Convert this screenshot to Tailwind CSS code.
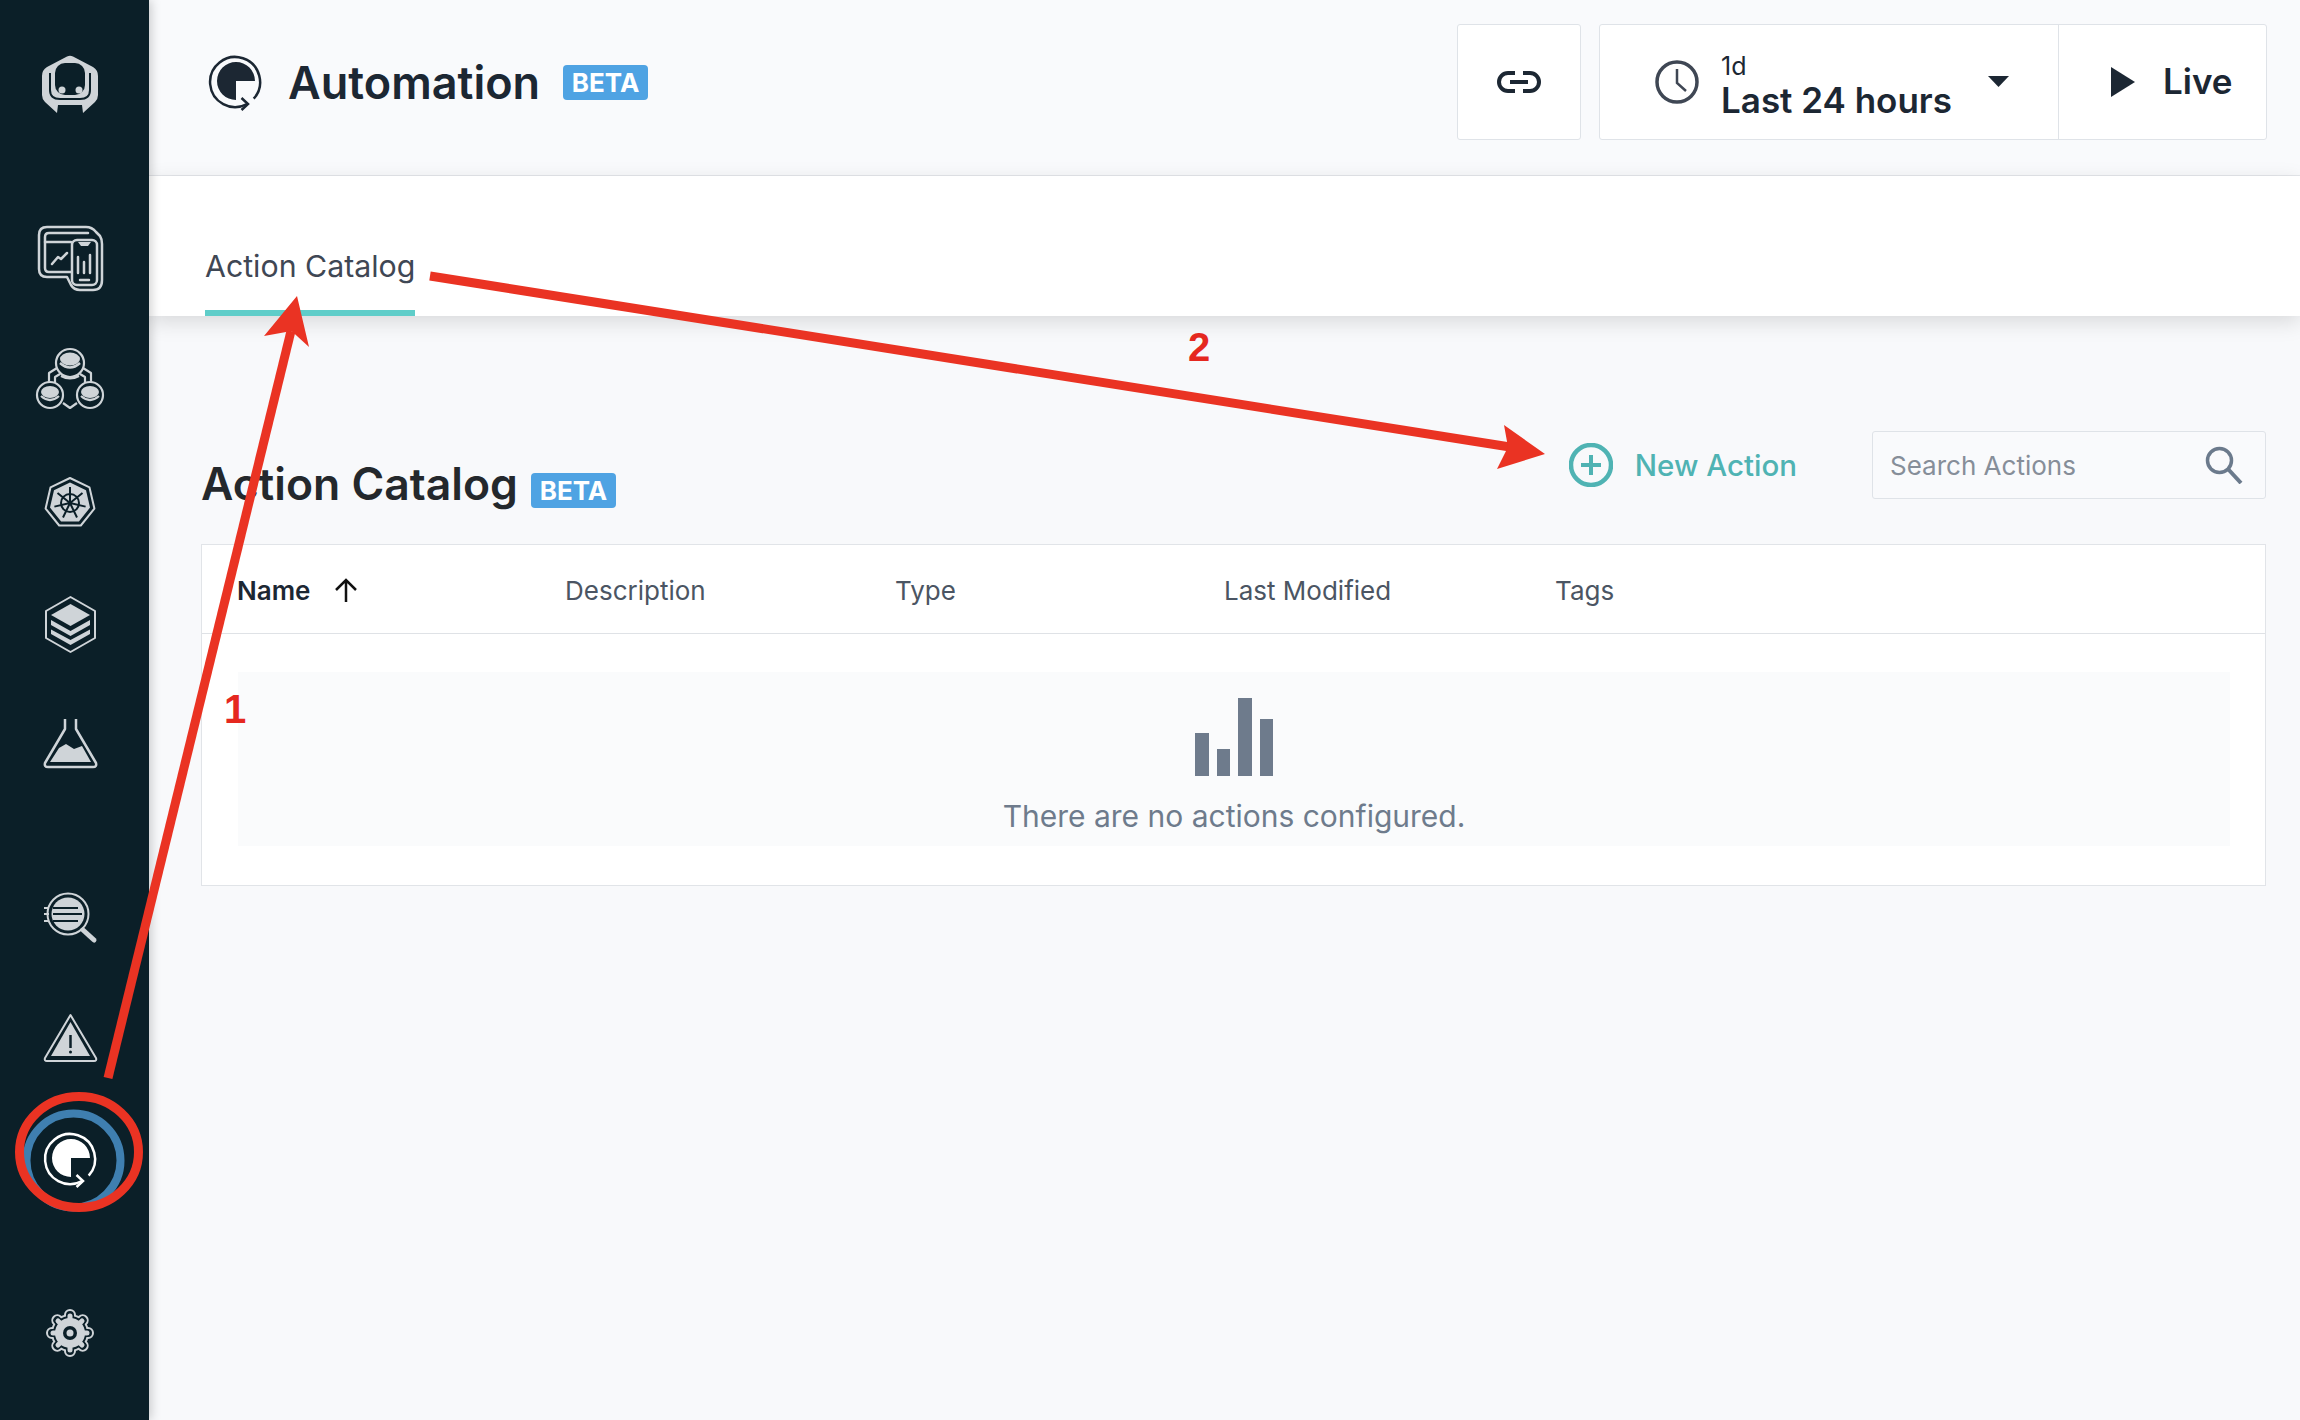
<!DOCTYPE html>
<html lang="en">
<head>
    <meta charset="UTF-8">
    <meta name="viewport" content="width=device-width, initial-scale=1.0">
    <title>Automation</title>
    <script src="https://cdn.jsdelivr.net/npm/@tailwindcss/browser@4"></script>
</head>
<body class="bg-[#f8f9fb]">
<div class="relative flex h-[1420px] w-[2300px] overflow-hidden bg-[#f8f9fb] font-['Inter',sans-serif] text-[#1c2733]">

    <!-- sidebar -->
    <aside class="z-10 flex h-full w-[149px] shrink-0 flex-col items-start bg-[#0b1f28] pl-[30px] pt-[45px] shadow-[2px_0_10px_rgba(0,0,0,0.2)]">
        <svg class="block" width="80" height="80" viewBox="0 0 80 80">
            <path d="M37 11.500 Q40 10 43 11.500 L63 22 Q68 25 68 31 V50 Q68 54 65 57 L53 68 L52 60 H28 L27 68 L15 57 Q12 54 12 50 V31 Q12 25 17 22 Z" fill="#cfd4d8"/>
            <rect x="25" y="18" width="30" height="32" rx="10" fill="#0b1f28"/>
            <path d="M20 28 V45 Q20 54 30 54 H50 Q60 54 60 45 V28" fill="none" stroke="#0b1f28" stroke-width="2"/>
            <circle cx="32" cy="45" r="3.500" fill="#cfd4d8"/>
            <circle cx="49" cy="45" r="3.500" fill="#cfd4d8"/>
        </svg>
        <svg class="mt-[90px] block" width="80" height="80" viewBox="0 0 80 80" fill="none" stroke="#cfd4d8" stroke-width="2.500" stroke-linecap="round" stroke-linejoin="round">
            <path d="M17 12 H56 Q62 12 66 17 L70 21 Q72 24 72 29 V65 Q72 75 63 75 H50 Q44 75 41 70 L37 62 H17 Q9 62 9 54 V20 Q9 12 17 12 Z"/>
            <path d="M41 57 H19 Q15 57 15 53 V22 Q15 18 19 18 H58"/>
            <path d="M15 27 H41"/>
            <rect x="42" y="25" width="25" height="45" rx="5"/>
            <path d="M48 27 H61 L58 31 H51 Z" fill="#cfd4d8" stroke="none"/>
            <path d="M48 42 V58 M54 47 V58 M60 40 V58"/>
            <path d="M50 65 H59"/>
            <path d="M22 49 L28 42 L31 44 L37 38"/>
        </svg>
        <svg class="mt-[40px] block" width="80" height="80" viewBox="0 0 80 80" fill="none" stroke="#cfd4d8" stroke-width="2.200" stroke-linejoin="round">
            <circle cx="40" cy="28" r="14"/>
            <circle cx="20" cy="60" r="13"/>
            <circle cx="60" cy="60" r="13"/>
            <ellipse cx="40" cy="24" rx="10" ry="6.500" fill="#cfd4d8" stroke="none"/>
            <path d="M30 28 Q40 37 50 28" stroke-width="2.500"/>
            <ellipse cx="20" cy="57" rx="9" ry="6" fill="#cfd4d8" stroke="none"/>
            <path d="M11 61 Q20 69 29 61"/>
            <ellipse cx="60" cy="57" rx="9" ry="6" fill="#cfd4d8" stroke="none"/>
            <path d="M51 61 Q60 69 69 61"/>
            <path d="M27 33 L19 38 V47 M53 33 L61 38 V47"/>
            <path d="M30 39 L25 42 V48 M50 39 L55 42 V48"/>
            <path d="M31 41 Q40 46 49 41"/>
            <path d="M33 68 L40 73 L47 68"/>
        </svg>
        <svg class="mt-[48px] block" width="80" height="80" viewBox="0 0 80 80" fill="none" stroke-linejoin="round">
            <polygon points="40,15 59.500,24.400 64.400,45.600 50.800,62.500 29.200,62.500 15.600,45.600 20.500,24.400" stroke="#cfd4d8" stroke-width="2"/>
            <polygon points="40,19.500 56,27.200 60,44.600 48.900,58.500 31.100,58.500 20,44.600 24,27.200" fill="#cfd4d8"/>
            <circle cx="40" cy="40" r="9" stroke="#0b1f28" stroke-width="2"/>
            <path d="M40 40 L40 24 M40 40 L52.500 30 M40 40 L55.600 43.600 M40 40 L47 54.500 M40 40 L33 54.500 M40 40 L24.400 43.600 M40 40 L27.500 30" stroke="#0b1f28" stroke-width="2"/>
        </svg>
        <svg class="mt-[42px] block" width="80" height="80" viewBox="0 0 80 80" fill="none" stroke-linejoin="round">
            <polygon points="40.500,12 65,26 65,53 40.500,67 16,53 16,26" stroke="#cfd4d8" stroke-width="2"/>
            <polygon points="40.500,19 60,30 40.500,41 21,30" fill="#cfd4d8"/>
            <polygon points="21,35 40.500,46 60,35 60,40 40.500,51 21,40" fill="#cfd4d8"/>
            <polygon points="21,44.500 40.500,55 60,44.500 60,49 40.500,60 21,49" fill="#cfd4d8"/>
        </svg>
        <svg class="mt-[40px] block" width="80" height="80" viewBox="0 0 80 80" fill="none" stroke="#cfd4d8" stroke-width="2.500" stroke-linejoin="round">
            <path d="M35 14 V24 L15 58 Q14 62 18 62 H63 Q67 62 66 58 L46 24 V14"/>
            <path d="M20 57 L29 43 L36 39 L44 44 L52 41 L61 57Z" fill="#cfd4d8" stroke="none"/>
        </svg>
        <svg class="mt-[93px] block" width="80" height="80" viewBox="0 0 80 80" fill="none">
            <circle cx="38" cy="36" r="20.500" stroke="#cfd4d8" stroke-width="2"/>
            <circle cx="38" cy="36" r="16.500" fill="#cfd4d8"/>
            <path d="M23 30 H48 M23 36 H52 M23 43 H48" stroke="#0b1f28" stroke-width="2"/>
            <path d="M14 30 H19 M14 36 H19 M14 43 H19" stroke="#cfd4d8" stroke-width="2"/>
            <path d="M53 52 L64 62" stroke="#cfd4d8" stroke-width="5" stroke-linecap="round"/>
        </svg>
        <svg class="mt-[40px] block" width="80" height="80" viewBox="0 0 80 80" fill="none">
            <path d="M40.500 17 L66 60 Q67 63 64 63 H17 Q14 63 15 60 Z" stroke="#cfd4d8" stroke-width="2" stroke-linejoin="round"/>
            <path d="M40.500 24 L60 58 H21 Z" fill="#cfd4d8"/>
            <path d="M40.500 37 V50" stroke="#0b1f28" stroke-width="2.500"/>
            <circle cx="40.500" cy="54" r="1.500" fill="#0b1f28"/>
        </svg>
        <svg class="ml-[5px] mt-[45px] block text-white" width="72" height="72" viewBox="0 0 72 72" fill="none">
            <path d="M36 35 H55 A19 19 0 1 0 36 54 Z" fill="currentColor"/>
            <path d="M53.700 52.700 A25 25 0 1 0 47 58 " stroke="currentColor" stroke-width="2.500"/>
            <path d="M41.500 52 L48 58 L41.500 64" stroke="currentColor" stroke-width="2.500"/>
        </svg>
        <svg class="ml-[5px] mt-[105px] block" width="70" height="70" viewBox="0 0 70 70" fill="none" stroke-linecap="round">
            <g transform="translate(35 33)">
                <circle r="19" fill="#cfd4d8"/>
                <path d="M0 -18 V18 M-18 0 H18 M-12.700 -12.700 L12.700 12.700 M12.700 -12.700 L-12.700 12.700" stroke="#cfd4d8" stroke-width="12"/>
                <circle r="17" fill="#0b1f28"/>
                <path d="M0 -18 V18 M-18 0 H18 M-12.700 -12.700 L12.700 12.700 M12.700 -12.700 L-12.700 12.700" stroke="#0b1f28" stroke-width="8"/>
                <circle r="15" fill="#cfd4d8"/>
                <path d="M0 -17 V17 M-17 0 H17 M-12 -12 L12 12 M12 -12 L-12 12" stroke="#cfd4d8" stroke-width="5"/>
                <circle r="7" fill="#0b1f28"/>
                <circle r="3.500" fill="#cfd4d8"/>
            </g>
        </svg>
    </aside>

    <main class="flex min-w-0 flex-1 flex-col">
        <!-- page header -->
        <header class="flex h-[176px] shrink-0 items-center border-b border-[#e5e7eb] bg-[#f9fafc] pb-[12px] pl-[51px] pr-[33px]">
            <svg class="block text-[#1c2733]" width="72" height="72" viewBox="0 0 72 72" fill="none">
                <path d="M36 35 H55 A19 19 0 1 0 36 54 Z" fill="currentColor"/>
                <path d="M53.700 52.700 A25 25 0 1 0 47 58" stroke="currentColor" stroke-width="2.500"/>
                <path d="M41.500 52 L48 58 L41.500 64" stroke="currentColor" stroke-width="2.500"/>
            </svg>
            <h1 class="ml-[16px] mt-[2px] text-[45px] font-semibold leading-none">Automation</h1>
            <span class="ml-[23px] mt-[1px] flex h-[35px] w-[85px] items-center justify-center rounded-[4px] bg-[#4fa3e3] text-[26px] font-bold text-white">BETA</span>

            <button class="ml-auto flex h-[116px] w-[124px] items-center justify-center rounded-[3px] border border-[#dfe3e8] bg-white">
                <svg width="44" height="22" viewBox="0 0 44 22" fill="none" stroke="#1c2733" stroke-width="4">
                    <path d="M18 2 H11 A9 9 0 0 0 11 20 H18"/>
                    <path d="M26 2 H33 A9 9 0 0 1 33 20 H26"/>
                    <path d="M13 11 H31"/>
                </svg>
            </button>
            <div class="ml-[18px] flex h-[116px] w-[668px] rounded-[3px] border border-[#dfe3e8] bg-white">
                <div class="flex w-[459px] items-center border-r border-[#dfe3e8] pl-[55px]">
                    <svg width="44" height="44" viewBox="0 0 44 44" fill="none" stroke="#3f4754" stroke-width="3.500">
                        <circle cx="22" cy="22" r="20"/>
                        <path d="M22 9 V23 L31 31" stroke-width="2.500"/>
                    </svg>
                    <div class="ml-[22px] mt-[8px] flex flex-col">
                        <span class="text-[25px] leading-[28px]">1d</span>
                        <span class="text-[35px] font-semibold leading-[40px]">Last 24 hours</span>
                    </div>
                    <svg class="ml-[36px]" width="21" height="11" viewBox="0 0 21 11"><path d="M0 0 H21 L10.500 11 Z" fill="#1c2733"/></svg>
                </div>
                <div class="flex items-center pl-[52px]">
                    <svg width="24" height="30" viewBox="0 0 24 30"><path d="M0 0 L24 15 L0 30 Z" fill="#1c2733"/></svg>
                    <span class="ml-[28px] text-[35px] font-semibold">Live</span>
                </div>
            </div>
        </header>

        <!-- tabs -->
        <nav class="z-[1] flex h-[140px] shrink-0 items-end bg-white pl-[56px] shadow-[0_6px_20px_rgba(0,0,0,0.13)]">
            <a class="block border-b-[6px] border-[#5fcdc9] pb-[26px] text-[30.300px] leading-[36px] text-[#3f4754]">Action Catalog</a>
        </nav>

        <section class="flex flex-col pl-[52px] pr-[34px] pt-[115px]">
            <div class="flex h-[68px] items-start">
                <h2 class="mt-[19px] text-[44.500px] font-semibold leading-[68px] text-[#24282c]">Action Catalog</h2>
                <span class="ml-[13px] mt-[42px] flex h-[35px] w-[85px] items-center justify-center rounded-[4px] bg-[#4fa3e3] text-[26px] font-bold text-white">BETA</span>
                <button class="ml-auto flex h-[68px] items-center text-[#4fb3b3]">
                    <svg width="44" height="44" viewBox="0 0 44 44" fill="none" stroke="#4fb3b3">
                        <circle cx="22" cy="22" r="20" stroke-width="4.500"/>
                        <path d="M22 12 V32 M12 22 H32" stroke-width="4"/>
                    </svg>
                    <span class="ml-[22px] text-[29.500px] font-medium">New Action</span>
                </button>
                <div class="ml-[75px] flex h-[68px] w-[394px] items-center justify-between rounded-[3px] border border-[#dfe3e8] bg-[#f9fafc] pl-[17px] pr-[22px]">
                    <span class="text-[26px] text-[#868e99]">Search Actions</span>
                    <svg width="38" height="38" viewBox="0 0 38 38" fill="none" stroke="#6b7a8c">
                        <circle cx="14.500" cy="14.500" r="12" stroke-width="3.500"/>
                        <path d="M23 23 L36 37" stroke-width="4"/>
                    </svg>
                </div>
            </div>

            <div class="mt-[45px] border border-[#e1e4e8] bg-white">
                <div class="flex h-[89px] items-center border-b border-[#dfe2e6] pl-[35px] pt-[2px] text-[26px] text-[#4b5563]">
                    <div class="flex w-[328px] items-center font-semibold text-[#1c2733]">
                        Name
                        <svg class="ml-[24px]" width="24" height="24" viewBox="0 0 24 24" fill="none" stroke="#111" stroke-width="2.500"><path d="M12 24 V2 M2 12 L12 2 L22 12"/></svg>
                    </div>
                    <div class="w-[330px]">Description</div>
                    <div class="w-[329px]">Type</div>
                    <div class="w-[331px]">Last Modified</div>
                    <div>Tags</div>
                </div>
                <div class="pb-[39px] pl-[36px] pr-[35px] pt-[38px]">
                    <div class="flex h-[174px] flex-col items-center bg-[#fafbfc] pt-[26px]">
                        <div class="flex h-[78px] items-end gap-[8px]">
                            <div class="h-[43px] w-[13.500px] bg-[#6e7b8c]"></div>
                            <div class="h-[27px] w-[13.500px] bg-[#6e7b8c]"></div>
                            <div class="h-[78px] w-[13.500px] bg-[#6e7b8c]"></div>
                            <div class="h-[57px] w-[13.500px] bg-[#6e7b8c]"></div>
                        </div>
                        <p class="mt-[19px] text-[30px] leading-[42px] text-[#6e7b8c]">There are no actions configured.</p>
                    </div>
                </div>
            </div>
        </section>
    </main>

    <!-- annotations drawn over the page -->
    <svg class="pointer-events-none absolute left-0 top-0 z-20" width="2300" height="1420" viewBox="0 0 2300 1420" fill="none">
        <circle cx="73.500" cy="1160.500" r="47" stroke="#3f7fb0" stroke-width="8"/>
        <ellipse cx="79" cy="1152" rx="59.500" ry="55.500" stroke="#ea3323" stroke-width="9"/>
        <path d="M108 1078 L291 331" stroke="#ea3323" stroke-width="9"/>
        <polygon points="297,296 309,347 291.500,331 264,336" fill="#ea3323"/>
        <path d="M430 276 L1510 447" stroke="#ea3323" stroke-width="9"/>
        <polygon points="1545,454 1504,425 1508,447 1497,469" fill="#ea3323"/>
        <text x="224" y="723" font-family="Liberation Sans" font-weight="700" font-size="40" fill="#e5281f">1</text>
        <text x="1188" y="361" font-family="Liberation Sans" font-weight="700" font-size="40" fill="#e5281f">2</text>
    </svg>
</div>
</body>
</html>
